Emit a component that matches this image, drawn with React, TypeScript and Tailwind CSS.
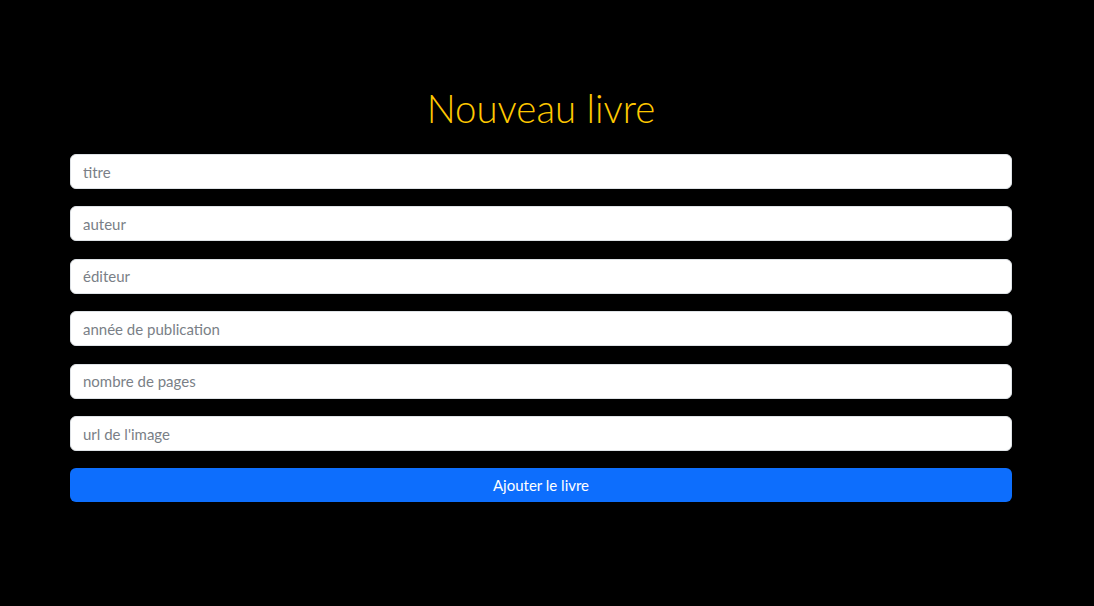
import React from 'react';

const fields = [
  'titre',
  'auteur',
  'éditeur',
  'année de publication',
  'nombre de pages',
  "url de l'image",
];

const App: React.FC = () => {
  return (
    <div className="min-h-[606px] w-full bg-black font-['Lato',sans-serif]">
      <div className="ml-[70px] w-[942px] pt-[85px]">
        <h1 className="text-center text-[38.4px] leading-[1.2] font-light text-[#ffc800] mb-[23px]">
          Nouveau livre
        </h1>
        <form className="flex flex-col gap-[17.4px]" onSubmit={(e) => e.preventDefault()}>
          {fields.map((f) => (
            <input
              key={f}
              type="text"
              placeholder={f}
              className="h-[35px] w-full rounded-[6px] border border-[#dee2e6] bg-white px-[12px] text-[15px] text-[#212529] placeholder:text-[#7a7f87] outline-none"
            />
          ))}
          <button
            type="submit"
            className="h-[34px] w-full rounded-[6px] bg-[#0d6efd] text-[15px] text-white"
          >
            Ajouter le livre
          </button>
        </form>
      </div>
    </div>
  );
};

export default App;
